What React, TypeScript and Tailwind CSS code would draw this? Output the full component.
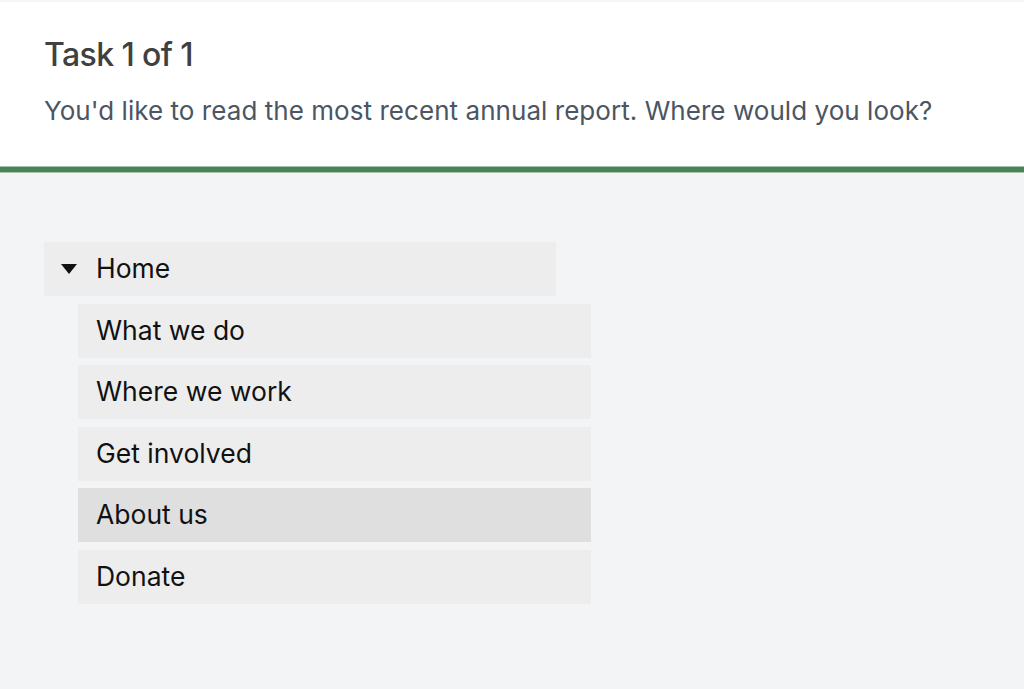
import React from "react";

const children = ["What we do", "Where we work", "Get involved", "About us", "Donate"];

export default function App() {
  return (
    <div className="min-h-[689px] w-full bg-[#f3f4f6]" style={{ fontFamily: "Inter, 'Noto Sans', sans-serif" }}>
      <div className="h-[2px] bg-[#f3f5f7]" />
      <header className="bg-white px-[44px] pt-[34px] pb-[38px]">
        <h1 className="text-[32px] leading-[38px] font-medium tracking-[-0.6px] text-[#404040]">Task 1 of 1</h1>
        <p className="mt-[20px] text-[26px] leading-[34px] text-[#4b5563] tracking-[0.05px]">
          You'd like to read the most recent annual report. Where would you look?
        </p>
      </header>
      <div className="h-[7px] bg-[#4a8355] border-y border-[#a9c4ae]" />
      <main className="px-[44px] pt-[69px]">
        <div className="flex w-[512px] h-[54px] items-center bg-[#ededed] pl-[17px]">
          <svg width="16" height="10" viewBox="0 0 16 10" className="shrink-0">
            <path d="M0 0 L16 0 L8 10 Z" fill="#111" />
          </svg>
          <span className="ml-[19px] text-[26.5px] text-[#111] tracking-[0px]">Home</span>
        </div>
        <div className="mt-[7.5px] ml-[34px] flex w-[513px] flex-col gap-[7.5px]">
          {children.map((c) => (
            <div
              key={c}
              className={
                c === "About us"
                  ? "flex h-[54px] items-center bg-[#dfdfdf] pl-[18px] text-[26.5px] text-[#111]"
                  : "flex h-[54px] items-center bg-[#ededed] pl-[18px] text-[26.5px] text-[#111]"
              }
            >
              {c}
            </div>
          ))}
        </div>
      </main>
    </div>
  );
}
